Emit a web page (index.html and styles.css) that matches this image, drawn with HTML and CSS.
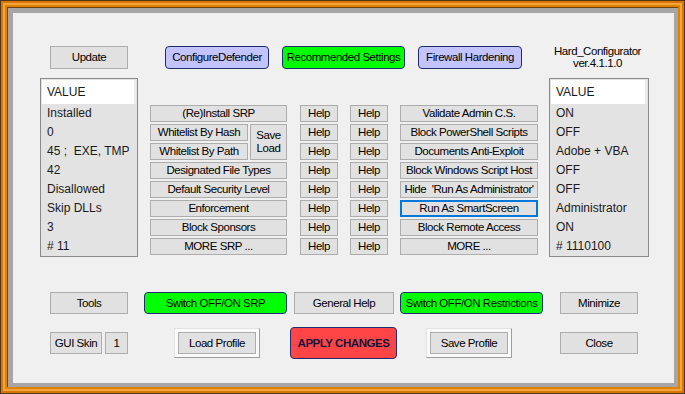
FILE: index.html
```html
<!DOCTYPE html>
<html lang="en">
<head>
    <meta charset="UTF-8">
    <meta name="viewport" content="width=device-width, initial-scale=1.0">
    <link rel="stylesheet" href="styles.css">
    <title>Hard_Configurator</title>
</head>
<body>
    <div class="window">
        <div class="panel">
            <div class="row row-top">
                <button class="btn btn-std">Update</button>
                <div class="top-links">
                    <button class="btn btn-round blue w104">ConfigureDefender</button>
                    <button class="btn btn-round green w123">Recommended Settings</button>
                    <button class="btn btn-round blue w104">Firewall Hardening</button>
                </div>
                <div class="title">Hard_Configurator<br>ver.4.1.1.0</div>
            </div>

            <div class="row row-main">
                <div class="listbox">
                    <div class="list-head">VALUE</div>
                    <div class="list-row">Installed</div>
                    <div class="list-row">0</div>
                    <div class="list-row">45 ;&nbsp; EXE, TMP</div>
                    <div class="list-row">42</div>
                    <div class="list-row">Disallowed</div>
                    <div class="list-row">Skip DLLs</div>
                    <div class="list-row">3</div>
                    <div class="list-row"># 11</div>
                </div>

                <div class="controls">
                    <div class="srp-grid">
                        <button class="btn btn-small span2">(Re)Install SRP</button>
                        <button class="btn btn-small">Whitelist By Hash</button>
                        <button class="btn btn-small save-load">Save<br>Load</button>
                        <button class="btn btn-small">Whitelist By Path</button>
                        <button class="btn btn-small span2">Designated File Types</button>
                        <button class="btn btn-small span2">Default Security Level</button>
                        <button class="btn btn-small span2">Enforcement</button>
                        <button class="btn btn-small span2">Block Sponsors</button>
                        <button class="btn btn-small span2">MORE SRP ...</button>
                    </div>
                    <div class="btn-col help-col first">
                        <button class="btn btn-small">Help</button>
                        <button class="btn btn-small">Help</button>
                        <button class="btn btn-small">Help</button>
                        <button class="btn btn-small">Help</button>
                        <button class="btn btn-small">Help</button>
                        <button class="btn btn-small">Help</button>
                        <button class="btn btn-small">Help</button>
                        <button class="btn btn-small">Help</button>
                    </div>
                    <div class="btn-col help-col">
                        <button class="btn btn-small">Help</button>
                        <button class="btn btn-small">Help</button>
                        <button class="btn btn-small">Help</button>
                        <button class="btn btn-small">Help</button>
                        <button class="btn btn-small">Help</button>
                        <button class="btn btn-small">Help</button>
                        <button class="btn btn-small">Help</button>
                        <button class="btn btn-small">Help</button>
                    </div>
                    <div class="btn-col restrict-col">
                        <button class="btn btn-small">Validate Admin C.S.</button>
                        <button class="btn btn-small">Block PowerShell Scripts</button>
                        <button class="btn btn-small">Documents Anti-Exploit</button>
                        <button class="btn btn-small">Block Windows Script Host</button>
                        <button class="btn btn-small">Hide &nbsp;'Run As Administrator'</button>
                        <button class="btn btn-small focused">Run As SmartScreen</button>
                        <button class="btn btn-small">Block Remote Access</button>
                        <button class="btn btn-small">MORE ...</button>
                    </div>
                </div>

                <div class="listbox">
                    <div class="list-head">VALUE</div>
                    <div class="list-row">ON</div>
                    <div class="list-row">OFF</div>
                    <div class="list-row">Adobe + VBA</div>
                    <div class="list-row">OFF</div>
                    <div class="list-row">OFF</div>
                    <div class="list-row">Administrator</div>
                    <div class="list-row">ON</div>
                    <div class="list-row"># 1110100</div>
                </div>
            </div>

            <div class="row row-tools">
                <button class="btn btn-std">Tools</button>
                <div class="tool-links">
                    <button class="btn btn-round green w143">Switch OFF/ON SRP</button>
                    <button class="btn w100">General Help</button>
                    <button class="btn btn-round green w143">Switch OFF/ON Restrictions</button>
                </div>
                <button class="btn btn-std">Minimize</button>
            </div>

            <div class="row row-actions">
                <div class="skin">
                    <button class="btn skin-name">GUI Skin</button>
                    <button class="btn skin-num">1</button>
                </div>
                <div class="action-links">
                    <div class="profile-frame">
                        <button class="btn btn-std">Load Profile</button>
                    </div>
                    <button class="btn btn-round red apply">APPLY CHANGES</button>
                    <div class="profile-frame">
                        <button class="btn btn-std">Save Profile</button>
                    </div>
                </div>
                <button class="btn btn-std">Close</button>
            </div>
        </div>
    </div>
</body>
</html>
```
FILE: styles.css
```css
body {
    margin: 0;
    font-family: 'Liberation Sans', Arial, sans-serif;
    background-color: #f0f0f0;
    color: #000;
}

.window {
    width: 685px;
    height: 394px;
    box-sizing: border-box;
    padding: 8px 7px 7px 8px;
    background-color: #d97800;
    box-shadow: inset 0 0 0 1px #4e3418,
                inset 0 0 0 3px #d87800,
                inset 0 0 0 5px #f3a43c,
                inset 0 0 0 7px #de8200,
                inset 0 0 0 8px #6e4210;
}

.panel {
    height: 100%;
    box-sizing: border-box;
    border-style: solid;
    border-width: 5px 4px 4px 5px;
    border-color: #a6a6a6;
    background-color: #f0f0f0;
    padding: 32px 0 0 27px;
}

.row {
    display: grid;
    grid-template-columns: 98px 411px 100px;
    align-items: center;
}

.row-top {
    height: 23px;
}

.row-main {
    margin-top: 10px;
    height: 179px;
    align-items: start;
}

.row-tools {
    margin-top: 35px;
    height: 22px;
}

.row-actions {
    margin-top: 13px;
    height: 32px;
}

/* buttons */
.btn {
    font-family: inherit;
    font-size: 11.5px;
    letter-spacing: -0.45px;
    color: #000;
    background-color: #e1e1e1;
    border: 1px solid #adadad;
    margin: 0;
    padding: 0;
    box-sizing: border-box;
    white-space: nowrap;
    overflow: hidden;
    height: 22px;
}

.btn-std {
    width: 78px;
    justify-self: center;
}

.row-top .btn {
    height: 23px;
}

.btn-round {
    border: 1px solid #1e2d6e;
    border-radius: 4px;
}

.blue {
    background-color: #c3c3ff;
}

.green {
    background-color: #00ff00;
}

.red {
    background-color: #ff4545;
}

.w100 { width: 100px; }
.w104 { width: 104px; }
.w123 { width: 123px; }
.w143 { width: 143px; }

.top-links {
    display: flex;
    gap: 13px;
    padding-left: 27px;
}

.title {
    font-size: 11.5px;
    letter-spacing: -0.45px;
    line-height: 12px;
    text-align: center;
    padding-right: 3px;
}

/* value lists */
.listbox {
    height: 179px;
    box-sizing: border-box;
    border: 1px solid #8a8a8a;
    background-color: #e3e3e3;
    font-size: 12px;
    color: #1a1a1a;
}

.list-head {
    background-color: #fff;
    margin: 1px 1px 0 1px;
    height: 24px;
    line-height: 24px;
    padding-left: 5px;
    border-right: 2px solid #ececec;
}

.list-row {
    height: 19px;
    line-height: 19px;
    padding-left: 6px;
}

/* SRP and restriction buttons */
.controls {
    display: flex;
    padding: 27px 0 0 12px;
}

.btn-small {
    height: 17px;
    line-height: 15px;
}

.srp-grid {
    display: grid;
    grid-template-columns: 98px 37px;
    grid-auto-rows: 17px;
    gap: 2px;
}

.span2 {
    grid-column: span 2;
}

.save-load {
    grid-row: span 2;
    height: 36px;
    line-height: 13px;
}

.btn-col {
    display: flex;
    flex-direction: column;
    gap: 2px;
}

.help-col {
    width: 38px;
    margin-left: 12px;
}

.help-col.first {
    margin-left: 13px;
}

.restrict-col {
    width: 138px;
    margin-left: 12px;
}

.focused {
    border: 2px solid #0078d7;
    line-height: 13px;
}

/* bottom rows */
.tool-links {
    display: flex;
    padding-left: 6px;
    gap: 7px;
}

.tool-links .w100 {
    margin-right: -1px;
}

.skin {
    display: flex;
    gap: 3px;
    justify-self: center;
}

.skin-name {
    width: 52px;
}

.skin-num {
    width: 23px;
}

.action-links {
    display: flex;
    align-items: center;
    padding-left: 36px;
    gap: 30px;
}

.profile-frame {
    padding: 3px;
    border: 1px solid;
    border-color: #e3e3e3 #9c9c9c #9c9c9c #e3e3e3;
    background-color: #fafafa;
}

.apply {
    width: 107px;
    height: 32px;
    font-weight: bold;
    color: #14143a;
    margin-right: -1px;
}
```
